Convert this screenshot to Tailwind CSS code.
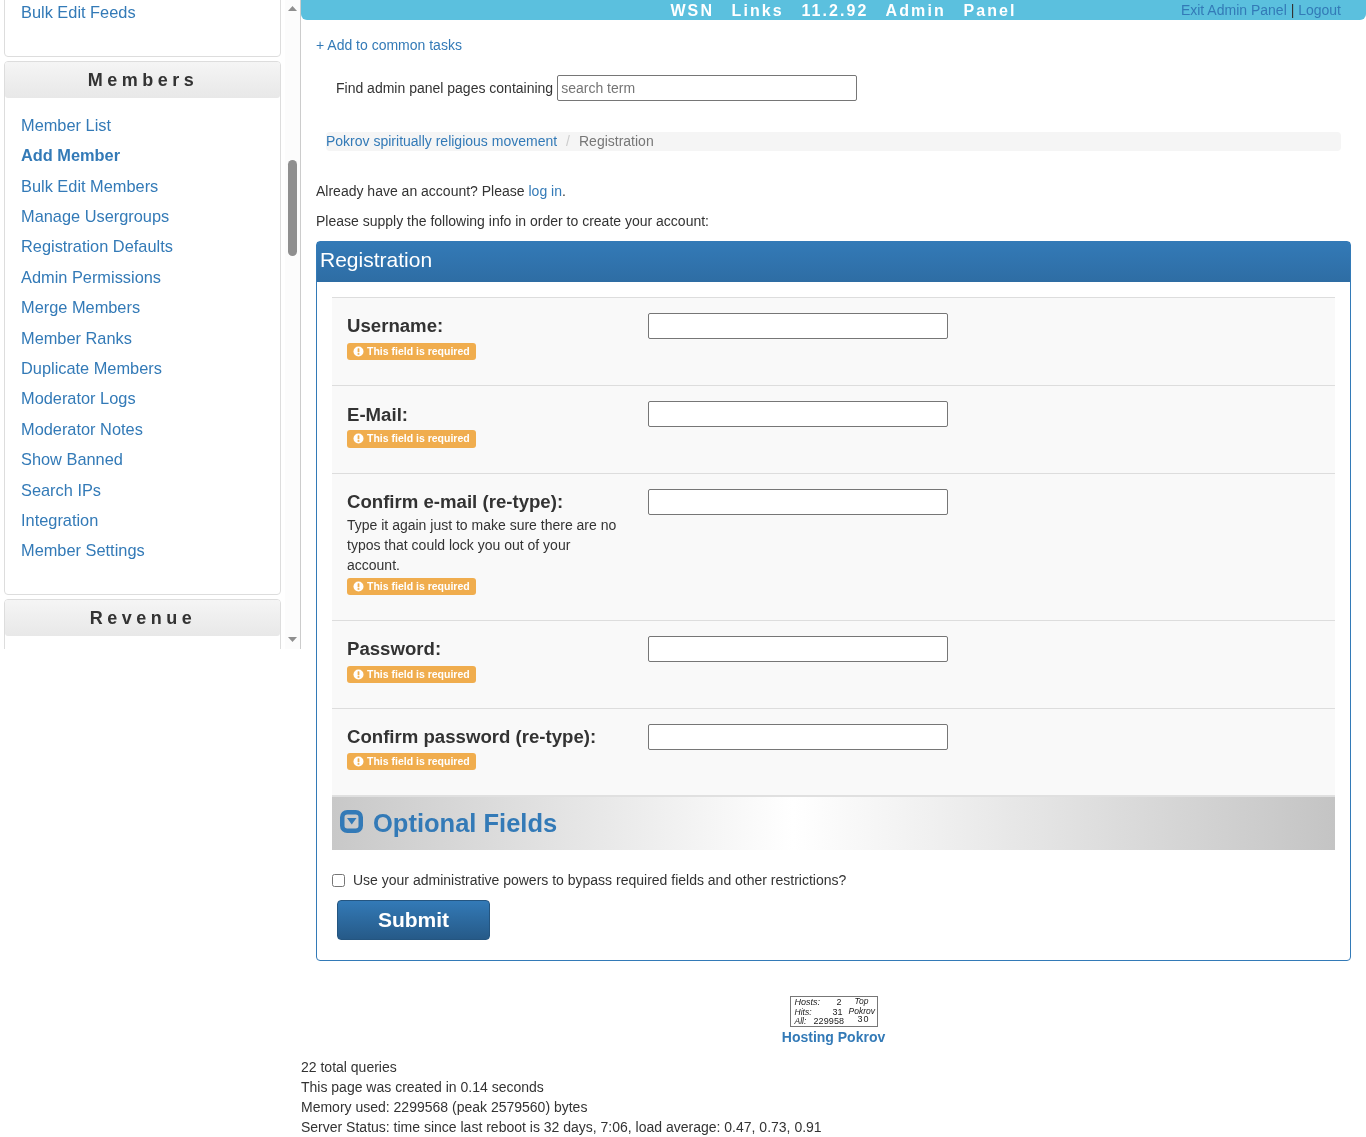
<!DOCTYPE html>
<html>
<head>
<meta charset="utf-8">
<script src="https://cdn.jsdelivr.net/npm/@tailwindcss/browser@4"></script>
</head>
<body class="bg-white text-[14px] leading-[20px] text-[#333] font-['Liberation_Sans',Arial,sans-serif]">
<div class="flex items-start w-[1366px] h-[1137px] overflow-hidden [will-change:transform]">
  <!-- sidebar -->
  <aside class="relative w-[301px] h-[649px] shrink-0 overflow-hidden border-r border-[#ccc]">
    <div class="w-[277px] ml-[4px] mt-[-20px] text-[16.38px]">
      <div class="h-[77px] border border-[#ddd] rounded-[4px] pl-[16px] pt-[19px]">
        <a class="block text-[#337ab7] leading-[25px]">Bulk Edit Feeds</a>
      </div>
      <div class="mt-[4px] h-[534px] border border-[#ddd] rounded-[4px]">
        <div class="h-[36px] pl-[1px] bg-gradient-to-b from-[#f5f5f5] to-[#e8e8e8] rounded-[3px] text-center font-bold text-[18px] leading-[36px] tracking-[4.5px]">Members</div>
        <ul class="mt-[11.8px] pl-[16px] text-[#337ab7] leading-[30.4px]">
          <li>Member List</li>
          <li class="font-bold">Add Member</li>
          <li>Bulk Edit Members</li>
          <li>Manage Usergroups</li>
          <li>Registration Defaults</li>
          <li>Admin Permissions</li>
          <li>Merge Members</li>
          <li>Member Ranks</li>
          <li>Duplicate Members</li>
          <li>Moderator Logs</li>
          <li>Moderator Notes</li>
          <li>Show Banned</li>
          <li>Search IPs</li>
          <li>Integration</li>
          <li>Member Settings</li>
        </ul>
      </div>
      <div class="mt-[4px] h-[80px] border border-[#ddd] rounded-[4px]">
        <div class="h-[36px] pl-[1px] bg-gradient-to-b from-[#f5f5f5] to-[#e8e8e8] rounded-[3px] text-center font-bold text-[18px] leading-[36px] tracking-[4.5px]">Revenue</div>
      </div>
    </div>
    <!-- scrollbar -->
    <div class="absolute right-0 top-0 w-[15px] h-full bg-[#fcfcfc]">
      <svg class="absolute left-[2px] top-[5px]" width="11" height="7" viewBox="0 0 11 7"><path d="M5.5 1 L10 6 H1 Z" fill="#8f8f8f"/></svg>
      <div class="absolute left-[3px] top-[160px] w-[9px] h-[96px] rounded-[5px] bg-[#8f8f8f]"></div>
      <svg class="absolute left-[2px] top-[636px]" width="11" height="7" viewBox="0 0 11 7"><path d="M1 1 H10 L5.5 6 Z" fill="#8f8f8f"/></svg>
    </div>
  </aside>

  <!-- main -->
  <main class="w-[1065px] shrink-0">
    <header class="relative h-[20px] bg-[#5bc0de] rounded-b-[6px] text-center">
      <span class="inline-block ml-[20px] font-bold text-[16px] leading-[21px] tracking-[2.1px] [word-spacing:11px] text-white">WSN Links 11.2.92 Admin Panel</span>
      <span class="absolute right-[25px] top-0 leading-[21px] text-[#333]"><a class="text-[#337ab7]">Exit Admin Panel</a> | <a class="text-[#337ab7]">Logout</a></span>
    </header>
    <div class="px-[15px]">
      <a class="block mt-[15px] text-[#337ab7]">+ Add to common tasks</a>
      <div class="flex items-center gap-[4px] mt-[20px] ml-[20px] h-[26px]">
        <span>Find admin panel pages containing</span>
        <input class="w-[300px] h-[26px] px-[3px] border border-[#767676] rounded-[2px] text-[14px] placeholder:text-[#757575]" placeholder="search term">
      </div>
      <div class="flex mt-[31px] ml-[10px] h-[19px] w-[1015px] bg-[#f5f5f5] rounded-[4px] leading-[19px]">
        <a class="text-[#337ab7]">Pokrov spiritually religious movement</a>
        <span class="px-[9px] text-[#ccc]">/</span>
        <span class="text-[#777]">Registration</span>
      </div>
      <p class="mt-[30px]">Already have an account? Please <a class="text-[#337ab7]">log in</a>.</p>
      <p class="mt-[10px]">Please supply the following info in order to create your account:</p>

      <section class="mt-[10px] w-[1035px] h-[720px] border border-[#337ab7] rounded-[4px]">
        <h2 class="h-[40px] pl-[3px] bg-gradient-to-b from-[#337ab7] to-[#2e6da4] text-white text-[21px] leading-[36px]">Registration</h2>
        <div class="mx-[15px] mt-[15px] w-[1003px] bg-[#f9f9f9]">
          <div class="flex h-[88px] border-t border-[#ddd] p-[15px]">
            <div class="w-[301px]">
              <div class="font-bold text-[18.62px] leading-[26px]">Username:</div>
              <span class="flex items-center gap-[3px] w-[129px] h-[17px] mt-[4px] pl-[6px] pb-[1px] bg-[#f0ad4e] rounded-[3px] text-white font-bold text-[10.5px]">
                <svg width="11" height="11" viewBox="0 0 11 11"><circle cx="5.5" cy="5.5" r="5" fill="#fff"/><rect x="4.6" y="2.3" width="1.8" height="4" rx=".5" fill="#f0ad4e"/><rect x="4.6" y="7.1" width="1.8" height="1.7" fill="#f0ad4e"/></svg>This field is required</span>
            </div>
            <input class="w-[300px] h-[26px] border border-[#767676] rounded-[2px] bg-white">
          </div>
          <div class="flex h-[88px] border-t border-[#ddd] p-[15px]">
            <div class="w-[301px]">
              <div class="mt-[1px] font-bold text-[18.62px] leading-[26px]">E-Mail:</div>
              <span class="flex items-center gap-[3px] w-[129px] h-[18px] mt-[2px] pl-[6px] pb-[2px] bg-[#f0ad4e] rounded-[3px] text-white font-bold text-[10.5px]">
                <svg width="11" height="11" viewBox="0 0 11 11"><circle cx="5.5" cy="5.5" r="5" fill="#fff"/><rect x="4.6" y="2.3" width="1.8" height="4" rx=".5" fill="#f0ad4e"/><rect x="4.6" y="7.1" width="1.8" height="1.7" fill="#f0ad4e"/></svg>This field is required</span>
            </div>
            <input class="w-[300px] h-[26px] border border-[#767676] rounded-[2px] bg-white">
          </div>
          <div class="flex h-[147px] border-t border-[#ddd] p-[15px]">
            <div class="w-[301px]">
              <div class="font-bold text-[18.62px] leading-[26px]">Confirm e-mail (re-type):</div>
              <p class="w-[280px]">Type it again just to make sure there are no typos that could lock you out of your account.</p>
              <span class="flex items-center gap-[3px] w-[129px] h-[17px] mt-[3px] pl-[6px] pb-[1px] bg-[#f0ad4e] rounded-[3px] text-white font-bold text-[10.5px]">
                <svg width="11" height="11" viewBox="0 0 11 11"><circle cx="5.5" cy="5.5" r="5" fill="#fff"/><rect x="4.6" y="2.3" width="1.8" height="4" rx=".5" fill="#f0ad4e"/><rect x="4.6" y="7.1" width="1.8" height="1.7" fill="#f0ad4e"/></svg>This field is required</span>
            </div>
            <input class="w-[300px] h-[26px] border border-[#767676] rounded-[2px] bg-white">
          </div>
          <div class="flex h-[88px] border-t border-[#ddd] p-[15px]">
            <div class="w-[301px]">
              <div class="font-bold text-[18.62px] leading-[26px]">Password:</div>
              <span class="flex items-center gap-[3px] w-[129px] h-[17px] mt-[4px] pl-[6px] pb-[1px] bg-[#f0ad4e] rounded-[3px] text-white font-bold text-[10.5px]">
                <svg width="11" height="11" viewBox="0 0 11 11"><circle cx="5.5" cy="5.5" r="5" fill="#fff"/><rect x="4.6" y="2.3" width="1.8" height="4" rx=".5" fill="#f0ad4e"/><rect x="4.6" y="7.1" width="1.8" height="1.7" fill="#f0ad4e"/></svg>This field is required</span>
            </div>
            <input class="w-[300px] h-[26px] border border-[#767676] rounded-[2px] bg-white">
          </div>
          <div class="flex h-[87px] border-t border-[#ddd] p-[15px]">
            <div class="w-[301px]">
              <div class="font-bold text-[18.62px] leading-[26px]">Confirm password (re-type):</div>
              <span class="flex items-center gap-[3px] w-[129px] h-[17px] mt-[3px] pl-[6px] pb-[1px] bg-[#f0ad4e] rounded-[3px] text-white font-bold text-[10.5px]">
                <svg width="11" height="11" viewBox="0 0 11 11"><circle cx="5.5" cy="5.5" r="5" fill="#fff"/><rect x="4.6" y="2.3" width="1.8" height="4" rx=".5" fill="#f0ad4e"/><rect x="4.6" y="7.1" width="1.8" height="1.7" fill="#f0ad4e"/></svg>This field is required</span>
            </div>
            <input class="w-[300px] h-[26px] border border-[#767676] rounded-[2px] bg-white">
          </div>
          <div class="flex items-center gap-[10px] h-[55px] pl-[8px] border-t-2 border-[#e0e0e0] bg-[linear-gradient(90deg,#c8c8c8_0%,#ffffff_46%,#c4c4c4_100%)]">
            <svg class="mb-[4px]" width="23" height="23" viewBox="0 0 23 23"><rect x="2.25" y="2.25" width="18.5" height="18.5" rx="5" fill="none" stroke="#337ab7" stroke-width="4.5"/><path d="M7 8 H16.5 L11.75 14.5 Z" fill="#337ab7"/></svg>
            <span class="mb-[2px] font-bold text-[25.5px] text-[#337ab7]">Optional Fields</span>
          </div>
        </div>
        <label class="flex items-center mt-[20px] ml-[15px] h-[20px]">
          <input type="checkbox" class="w-[13px] h-[13px] m-0">
          <span class="ml-[8px]">Use your administrative powers to bypass required fields and other restrictions?</span>
        </label>
        <button class="block mt-[10px] ml-[20px] w-[153px] h-[40px] border border-[#245580] rounded-[4px] bg-gradient-to-b from-[#337ab7] to-[#265a88] text-white font-bold text-[21px]">Submit</button>
      </section>
    </div>

    <div class="flex flex-col items-center mt-[35px]">
      <div class="relative w-[88px] h-[31px] border border-[#777] bg-white text-[8.5px] leading-[10px] text-[#222]">
        <span class="absolute left-[4px] top-0 italic text-[9px]">Hosts:</span>
        <span class="absolute left-[46px] top-0 text-[9px]">2</span>
        <span class="absolute left-[64px] top-[-1px] italic">Top</span>
        <span class="absolute left-[4px] top-[10px] italic">Hits:</span>
        <span class="absolute left-[42px] top-[10px] text-[9px]">31</span>
        <span class="absolute left-[58px] top-[9px] italic">Pokrov</span>
        <span class="absolute left-[4px] top-[19px] italic">All:</span>
        <span class="absolute left-[23px] top-[19px] text-[9px] tracking-[0.1px]">229958</span>
        <span class="absolute left-[67px] top-[17px] text-[9px] tracking-[1px]">30</span>
      </div>
      <a class="font-bold text-[#337ab7]">Hosting Pokrov</a>
    </div>
    <div class="mt-[10px]">
      <p>22 total queries</p>
      <p>This page was created in 0.14 seconds</p>
      <p>Memory used: 2299568 (peak 2579560) bytes</p>
      <p>Server Status: time since last reboot is 32 days, 7:06, load average: 0.47, 0.73, 0.91</p>
    </div>
  </main>
</div>
</body>
</html>
